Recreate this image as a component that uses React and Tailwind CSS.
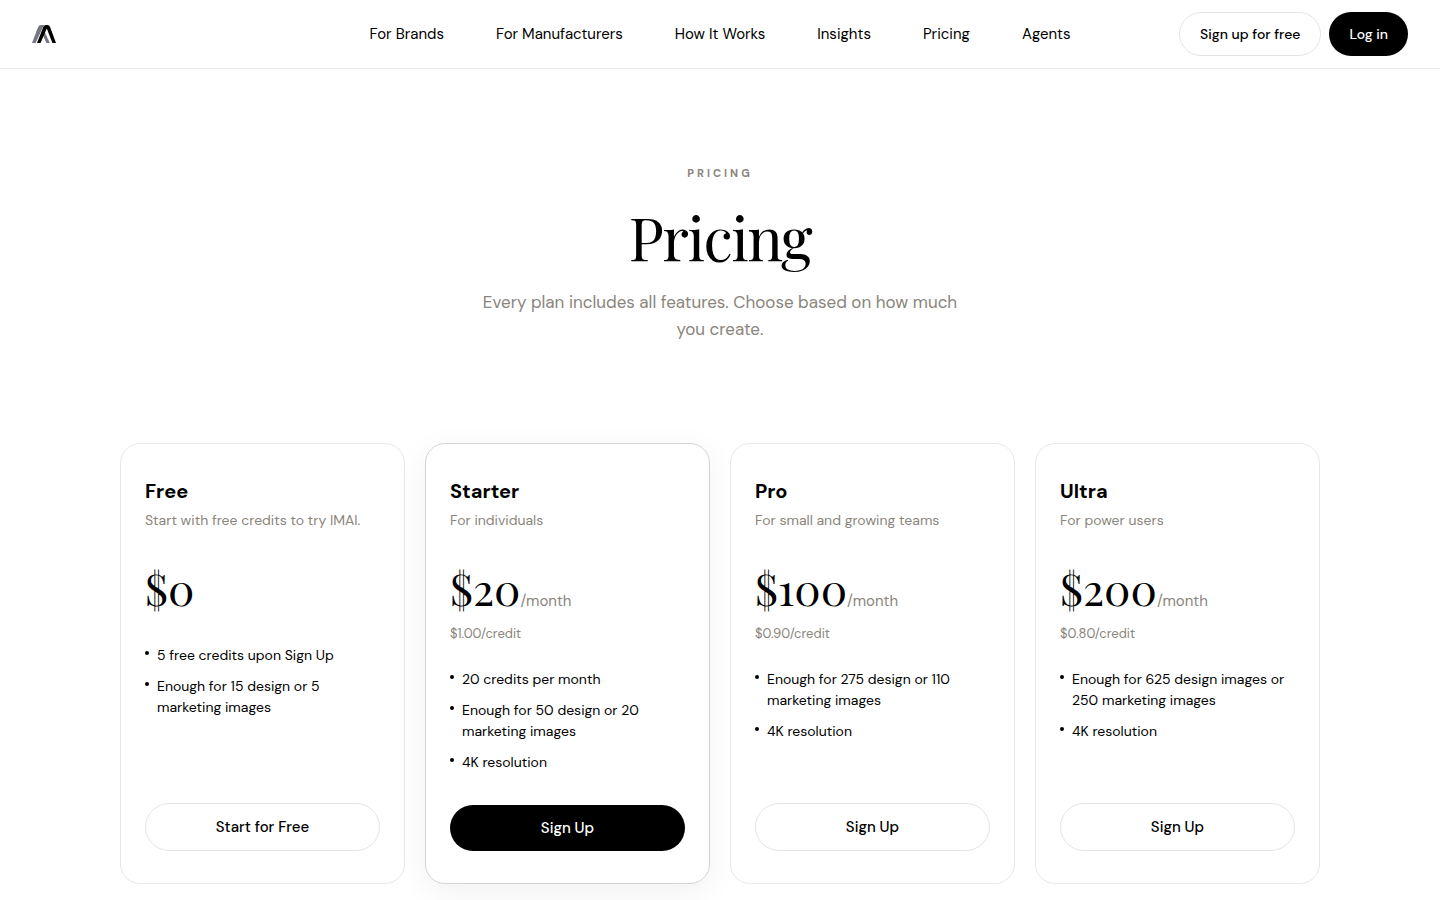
import clsx from "clsx";

const navLinks = [
  { label: "For Brands", href: "#brands" },
  { label: "For Manufacturers", href: "#manufacturers" },
  { label: "How It Works", href: "#how-it-works" },
  { label: "Insights", href: "#insights" },
  { label: "Pricing", href: "#pricing" },
  { label: "Agents", href: "#agents" },
];

const plans = [
  {
    name: "Free",
    description: "Start with free credits to try IMAI.",
    price: "$0",
    features: ["5 free credits upon Sign Up", "Enough for 15 design or 5 marketing images"],
    cta: "Start for Free",
  },
  {
    name: "Starter",
    description: "For individuals",
    price: "$20",
    period: "/month",
    perCredit: "$1.00/credit",
    features: ["20 credits per month", "Enough for 50 design or 20 marketing images", "4K resolution"],
    cta: "Sign Up",
    featured: true,
  },
  {
    name: "Pro",
    description: "For small and growing teams",
    price: "$100",
    period: "/month",
    perCredit: "$0.90/credit",
    features: ["Enough for 275 design or 110 marketing images", "4K resolution"],
    cta: "Sign Up",
  },
  {
    name: "Ultra",
    description: "For power users",
    price: "$200",
    period: "/month",
    perCredit: "$0.80/credit",
    features: ["Enough for 625 design images or 250 marketing images", "4K resolution"],
    cta: "Sign Up",
  },
];

const Logo = () => (
  <svg width="24" height="18" viewBox="0 0 24 18" aria-hidden="true">
    <path d="M0 18 6 2.200Q6.900 0 9 0H12.500L11 2 3.600 18Z" fill="#757783" />
    <path d="M12.500 6.500 17.800 18H14.400L10.800 10Z" fill="#757783" />
    <path d="M5 18 11.400 1.800Q12.100 0 14 0H15.500Q17.400 0 18 1.800L24 18H20.400L14.800 3.600 8.500 18Z" fill="#000" />
  </svg>
);

const Header = () => (
  <header className="border-b border-[#e8e8e8] bg-white">
    <div className="grid h-17 grid-cols-[1fr_auto_1fr] items-center px-8">
      <a href="#home" aria-label="Home" className="justify-self-start">
        <Logo />
      </a>
      <nav className="flex items-center gap-13 text-[15px]">
        {navLinks.map((link) => (
          <a key={link.href} href={link.href} className="whitespace-nowrap">
            {link.label}
          </a>
        ))}
      </nav>
      <div className="flex items-center gap-2 justify-self-end text-sm font-medium">
        <button className="h-11 rounded-full border border-[#e5e5e5] px-5 whitespace-nowrap">Sign up for free</button>
        <button className="h-11 rounded-full bg-black px-5 whitespace-nowrap text-white">Log in</button>
      </div>
    </div>
  </header>
);

const PlanCard = ({ plan }) => (
  <article
    className={clsx(
      "flex flex-col rounded-[20px] border bg-white px-6 py-8",
      plan.featured ? "border-[#d4d4d4] shadow-[0_8px_32px_rgba(0,0,0,0.06)]" : "border-[#e8e8e8]"
    )}
  >
    <h2 className="text-xl leading-[30px] font-bold">{plan.name}</h2>
    <p className="mt-1 text-sm leading-[21px] text-[#8a857c]">{plan.description}</p>

    <div className="mt-[26px] flex items-baseline">
      <span className="font-['Playfair_Display','Liberation_Serif',serif] text-[44px] leading-[62px]">{plan.price}</span>
      {plan.period && <span className="text-[15px] text-[#8a857c]">{plan.period}</span>}
    </div>
    {plan.perCredit && <p className="mt-[6px] text-[13px] leading-[18px] text-[#8a857c]">{plan.perCredit}</p>}

    <ul className="mt-[26px] mb-8 flex flex-col gap-[10px] text-sm leading-[21px]">
      {plan.features.map((feature) => (
        <li key={feature} className="flex items-start gap-2">
          <span className="mt-[6px] size-1 shrink-0 rounded-full bg-black" />
          <span>{feature}</span>
        </li>
      ))}
    </ul>

    <button
      className={clsx(
        "mt-auto w-full rounded-full text-[15px] font-medium",
        plan.featured ? "h-[46px] bg-black text-white" : "h-12 border border-[#e5e5e5]"
      )}
    >
      {plan.cta}
    </button>
  </article>
);

export default function App() {
  return (
    <div className="min-h-screen bg-white font-['DM_Sans','Inter',sans-serif] text-black">
      <Header />
      <main>
        <section className="flex flex-col items-center px-6 pt-24 pb-25 text-center">
          <p className="text-[11px] leading-4 font-bold tracking-[3px] text-[#8a857c] uppercase">Pricing</p>
          <h1 className="mt-6 font-['Playfair_Display','Liberation_Serif',serif] text-6xl leading-[62px] font-normal tracking-tight">
            Pricing
          </h1>
          <p className="mt-[22px] max-w-[500px] text-[17px] leading-[27px] text-[#8a857c]">
            Every plan includes all features. Choose based on how much you create.
          </p>
        </section>
        <section className="mx-auto grid max-w-[1248px] gap-5 px-6 pb-24 sm:grid-cols-2 lg:grid-cols-4">
          {plans.map((plan) => (
            <PlanCard key={plan.name} plan={plan} />
          ))}
        </section>
      </main>
    </div>
  );
}
